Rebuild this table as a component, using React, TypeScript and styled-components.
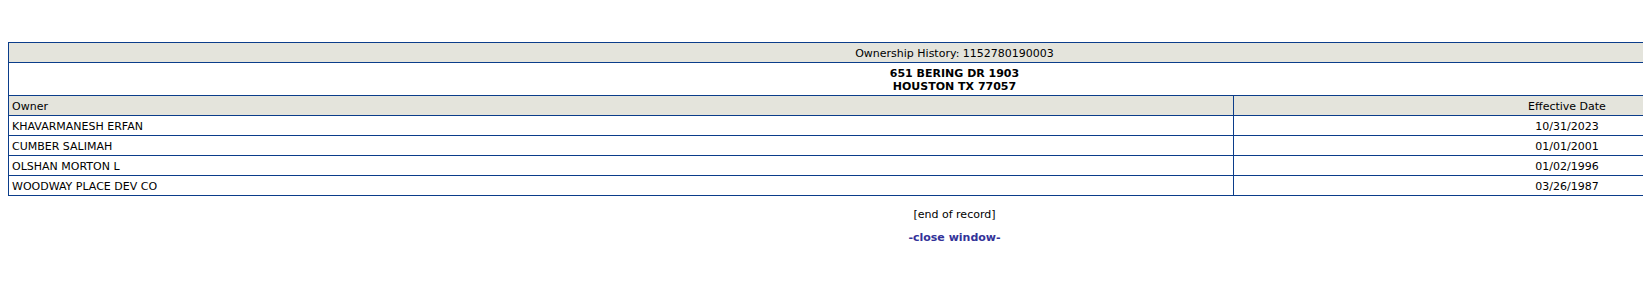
import React from "react";
import styled, { createGlobalStyle } from "styled-components";

const Global = createGlobalStyle`
  html, body { overflow: hidden; }
  body {
    margin: 8px 0 8px 8px;
    background: #ffffff;
    font-family: "DejaVu Sans", Verdana, sans-serif;
    font-size: 11px;
    color: #000000;
  }
`;

const Viewport = styled.div`
  width: 100%;
  overflow: hidden;
`;

const Page = styled.div`
  width: 1893px;
  padding-top: 34px;
`;

const Table = styled.table`
  width: 1893px;
  border-collapse: collapse;
  border: 1px solid #0b3d8a;
`;

const Cell = styled.td<{ $align?: "left" | "center"; $head?: boolean; $bold?: boolean; $w?: string }>`
  border: 1px solid #0b3d8a;
  padding: 4px 3px 2px;
  line-height: 13px;
  font-size: 11px;
  text-align: ${(p) => p.$align ?? "left"};
  background: ${(p) => (p.$head ? "#e4e4dc" : "#ffffff")};
  font-weight: ${(p) => (p.$bold ? "bold" : "normal")};
  width: ${(p) => p.$w ?? "auto"};
`;

const Footer = styled.div`
  display: flex;
  flex-direction: column;
  align-items: center;
  padding-top: 12px;
  gap: 10px;
`;

const EndNote = styled.div`
  font-size: 11px;
  line-height: 13px;
`;

const CloseLink = styled.a`
  font-size: 11px;
  line-height: 13px;
  font-weight: bold;
  color: #333399;
  text-decoration: none;
  cursor: pointer;
`;

const rows = [
  ["KHAVARMANESH ERFAN", "10/31/2023"],
  ["CUMBER SALIMAH", "01/01/2001"],
  ["OLSHAN MORTON L", "01/02/1996"],
  ["WOODWAY PLACE DEV CO", "03/26/1987"],
];

export default function App() {
  return (
    <>
      <Global />
      <Viewport>
        <Page>
          <Table>
            <tbody>
              <tr>
                <Cell colSpan={2} $head $align="center">
                  Ownership History: 1152780190003
                </Cell>
              </tr>
              <tr>
                <Cell colSpan={2} $align="center" $bold>
                  651 BERING DR 1903
                  <br />
                  HOUSTON TX 77057
                </Cell>
              </tr>
              <tr>
                <Cell $head $w="1218px">Owner</Cell>
                <Cell $head $align="center">Effective Date</Cell>
              </tr>
              {rows.map(([owner, date]) => (
                <tr key={owner}>
                  <Cell>{owner}</Cell>
                  <Cell $align="center">{date}</Cell>
                </tr>
              ))}
            </tbody>
          </Table>
          <Footer>
            <EndNote>[end of record]</EndNote>
            <CloseLink>-close window-</CloseLink>
          </Footer>
        </Page>
      </Viewport>
    </>
  );
}
